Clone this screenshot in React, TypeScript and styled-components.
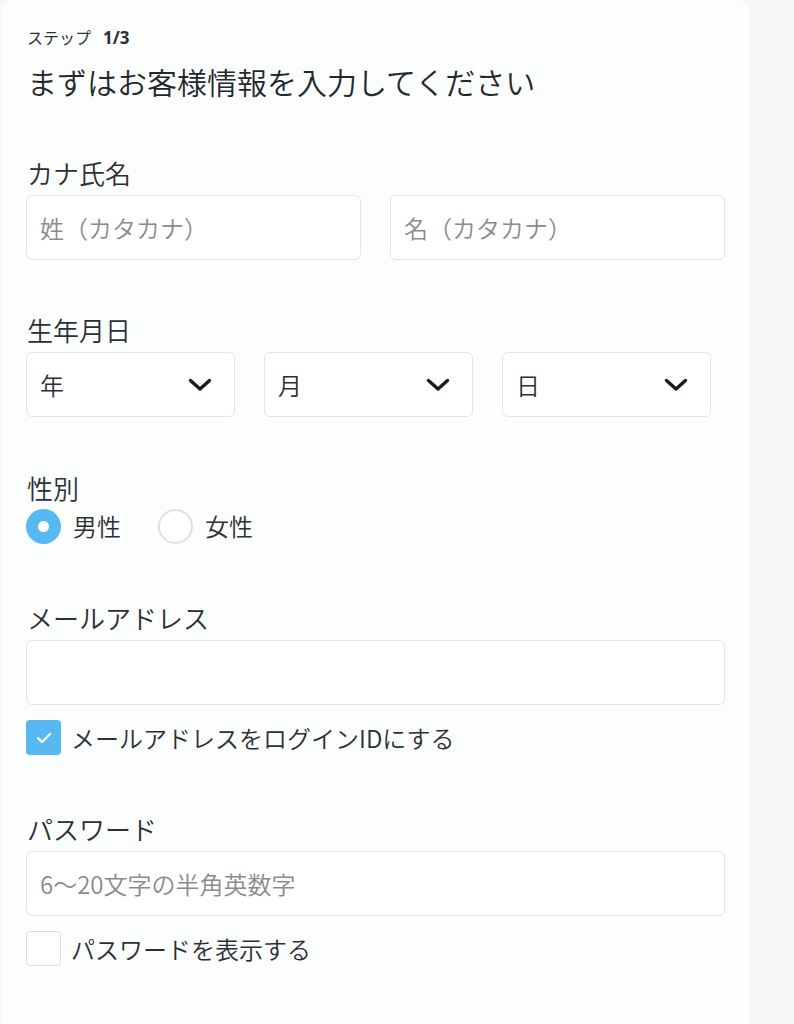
import React from "react";
import styled, { createGlobalStyle } from "styled-components";

const GlobalStyle = createGlobalStyle`
  html, body {
    margin: 0;
    padding: 0;
    background: #f5f6f8;
  }
  body {
    font-family: "Noto Sans CJK JP", "Noto Sans", sans-serif;
    font-weight: 350;
    color: #2b3037;
  }
  * { box-sizing: border-box; }
`;

const Page = styled.div`
  padding-left: 1px;
  min-height: 1024px;
`;

const Card = styled.main`
  width: 749px;
  min-height: 1100px;
  background: #fcfdfd;
  border-radius: 12px 12px 0 0;
  padding: 27px 25px 40px 25px;
  display: flex;
  flex-direction: column;
`;

const Step = styled.div`
  display: flex;
  align-items: baseline;
  font-size: 16px;
  line-height: 20px;
  font-weight: 400;
  color: #2b3037;
  padding-left: 1px;
`;

const StepNum = styled.span`
  font-family: "Noto Sans", sans-serif;
  font-weight: 700;
  font-size: 17px;
  margin-left: 12px;
`;

const Title = styled.h1`
  margin: 13px 0 0 1px;
  font-size: 30px;
  line-height: 40px;
  font-weight: 350;
  color: #23282f;
`;

const Section = styled.section<{ $gap: number }>`
  margin-top: ${(p) => p.$gap}px;
  display: flex;
  flex-direction: column;
`;

const Label = styled.div`
  font-size: 26px;
  line-height: 34px;
  margin: 0 0 5px 1px;
  color: #2b3037;
`;

const Row = styled.div`
  display: grid;
  grid-template-columns: 1fr 1fr;
  gap: 29px;
`;

const DateRow = styled.div`
  display: grid;
  grid-template-columns: repeat(3, 209px);
  gap: 29px;
`;

const TextInput = styled.input`
  width: 100%;
  height: 65px;
  border: 1.5px solid #e4e5e7;
  border-radius: 6px;
  background: #ffffff;
  padding: 0 13px;
  font-family: "Noto Sans CJK JP", "Noto Sans", sans-serif;
  font-weight: 350;
  font-size: 24px;
  color: #2b3037;
  outline: none;
  &::placeholder {
    color: #8b8b8b;
  }
`;

const FullInput = styled(TextInput)`
  width: 699px;
`;

const SelectBox = styled.div`
  height: 65px;
  border: 1.5px solid #e4e5e7;
  border-radius: 6px;
  background: #ffffff;
  padding: 0 22px 0 13px;
  display: flex;
  align-items: center;
  justify-content: space-between;
  font-size: 24px;
  color: #2b3037;
`;

const RadioRow = styled.div`
  display: flex;
  align-items: center;
  margin-top: -1px;
`;

const RadioOption = styled.label`
  display: flex;
  align-items: center;
  gap: 12px;
  font-size: 24px;
  line-height: 34px;
  height: 34px;
  margin-right: 37px;
`;

const RadioCircle = styled.span<{ $checked?: boolean }>`
  width: 35px;
  height: 35px;
  flex: none;
  border-radius: 50%;
  display: flex;
  align-items: center;
  justify-content: center;
  background: ${(p) => (p.$checked ? "#58b8f1" : "#ffffff")};
  border: ${(p) => (p.$checked ? "none" : "2px solid #e0e0e0")};
  &::after {
    content: "";
    display: ${(p) => (p.$checked ? "block" : "none")};
    width: 11px;
    height: 11px;
    border-radius: 50%;
    background: #ffffff;
  }
`;

const CheckRow = styled.label`
  display: flex;
  align-items: center;
  gap: 10px;
  margin-top: 15px;
  font-size: 24px;
  line-height: 35px;
`;

const CheckBox = styled.span<{ $checked?: boolean }>`
  width: 35px;
  height: 35px;
  flex: none;
  border-radius: 4px;
  display: flex;
  align-items: center;
  justify-content: center;
  background: ${(p) => (p.$checked ? "#58b8f1" : "#ffffff")};
  border: ${(p) => (p.$checked ? "none" : "1.5px solid #dcdddf")};
`;

const Chevron = () => (
  <svg width="24" height="14" viewBox="0 0 24 14" fill="none">
    <path
      d="M2.5 2.5 L12 11 L21.5 2.5"
      stroke="#161b26"
      strokeWidth="3.4"
      strokeLinecap="round"
      strokeLinejoin="round"
    />
  </svg>
);

const Check = () => (
  <svg width="16" height="12" viewBox="0 0 16 12" fill="none">
    <path
      d="M2 6.2 L6 10 L14 2"
      stroke="#ffffff"
      strokeWidth="2.4"
      strokeLinecap="round"
      strokeLinejoin="round"
    />
  </svg>
);

export default function App() {
  return (
    <>
      <GlobalStyle />
      <Page>
        <Card>
          <Step>
            ステップ<StepNum>1/3</StepNum>
          </Step>
          <Title>まずはお客様情報を入力してください</Title>

          <Section $gap={55}>
            <Label>カナ氏名</Label>
            <Row>
              <TextInput placeholder="姓（カタカナ）" />
              <TextInput placeholder="名（カタカナ）" />
            </Row>
          </Section>

          <Section $gap={53}>
            <Label>生年月日</Label>
            <DateRow>
              {["年", "月", "日"].map((t) => (
                <SelectBox key={t}>
                  <span>{t}</span>
                  <Chevron />
                </SelectBox>
              ))}
            </DateRow>
          </Section>

          <Section $gap={54}>
            <Label>性別</Label>
            <RadioRow>
              <RadioOption>
                <RadioCircle $checked />
                男性
              </RadioOption>
              <RadioOption>
                <RadioCircle />
                女性
              </RadioOption>
            </RadioRow>
          </Section>

          <Section $gap={58}>
            <Label>メールアドレス</Label>
            <FullInput />
            <CheckRow>
              <CheckBox $checked>
                <Check />
              </CheckBox>
              メールアドレスをログインIDにする
            </CheckRow>
          </Section>

          <Section $gap={57}>
            <Label>パスワード</Label>
            <FullInput placeholder="6〜20文字の半角英数字" />
            <CheckRow>
              <CheckBox />
              パスワードを表示する
            </CheckRow>
          </Section>
        </Card>
      </Page>
    </>
  );
}
